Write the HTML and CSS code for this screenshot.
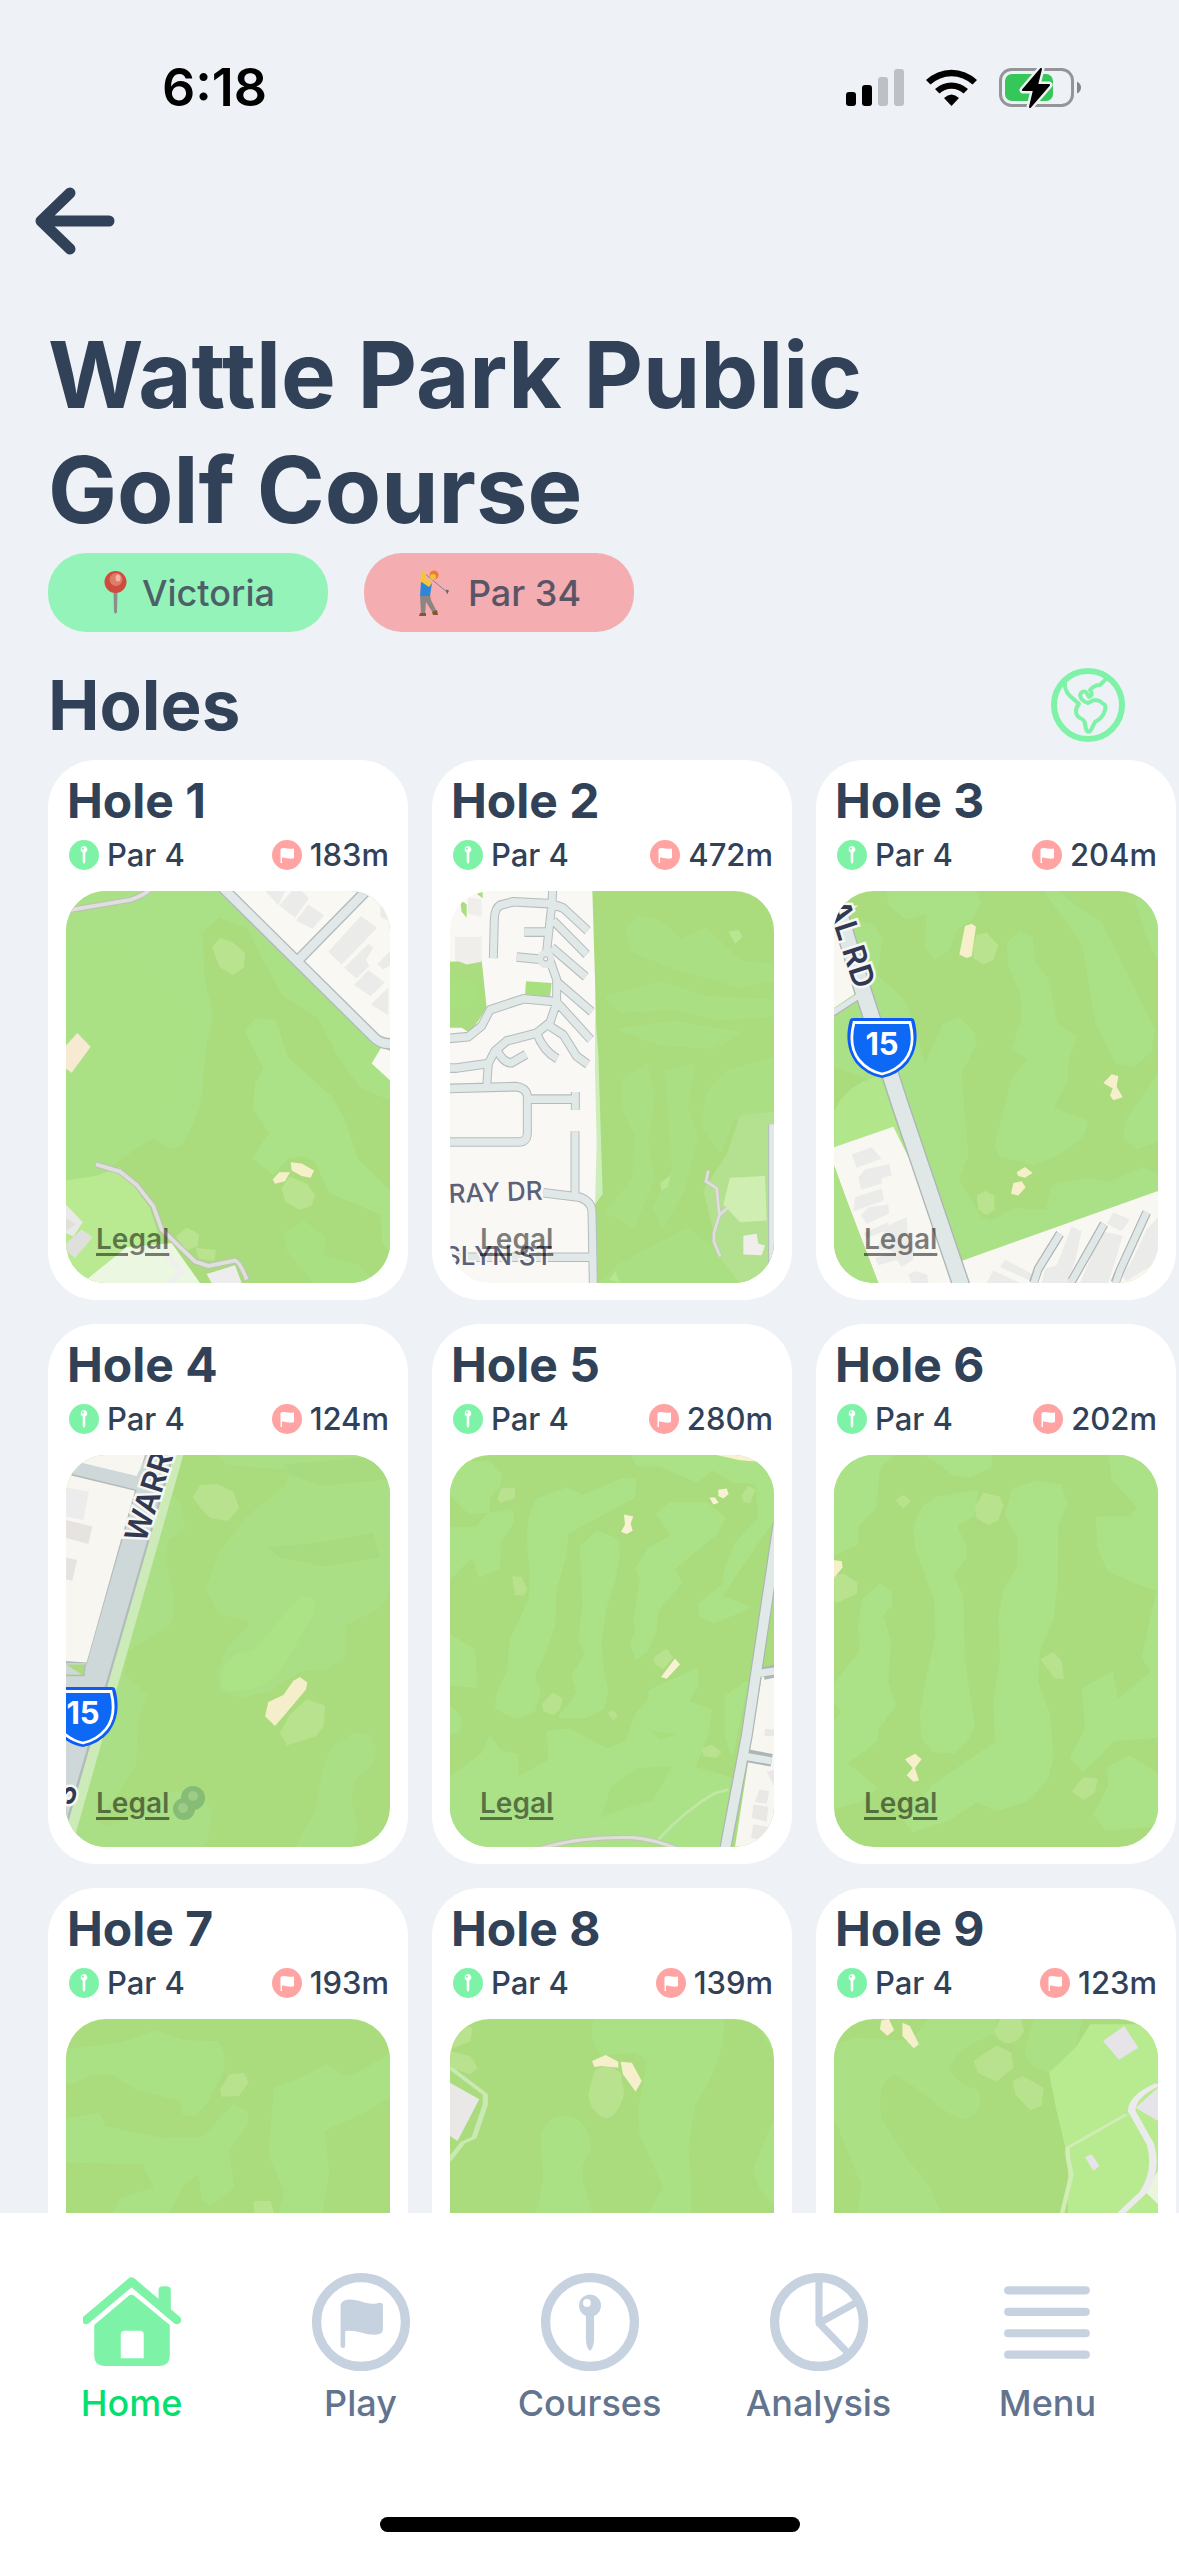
FILE: index.html
```html
<!DOCTYPE html>
<html lang="en">
<head>
<meta charset="utf-8">
<meta name="viewport" content="width=device-width, initial-scale=1">
<title>Wattle Park Public Golf Course</title>
<link rel="stylesheet" href="styles.css">
</head>
<body>
<svg class="defs" aria-hidden="true">
  <symbol id="tee" viewBox="0 0 96 96">
    <path fill-rule="evenodd" d="M48 21a11 11 0 0 0-4 21.200V64q0 9 4 12.500q4-3.500 4-12.500V42.200A11 11 0 0 0 48 21zM45 25.500a3.800 3.800 0 1 1 0 7.600a3.800 3.800 0 0 1 0-7.600z"/>
  </symbol>
  <symbol id="flag" viewBox="0 0 96 96">
    <path d="M28 31q2-5 9-5c10 0 15 5 25 4q7-2 7.500 1V55q0 5-8 5.500c-12 0-17-5.500-29-3.500V71q0 2.500-2.200 2.500T28 71z"/>
  </symbol>
  <symbol id="par-icon" viewBox="0 0 30 30">
    <circle cx="15" cy="15" r="15" fill="#7ef3a8"/>
    <path fill="#fff" fill-rule="evenodd" d="M15 6a3.400 3.400 0 0 0-1.300 6.500V22l1.300 2 1.300-2V12.500A3.400 3.400 0 0 0 15 6zM14 7.500a1 1 0 1 1 0 2a1 1 0 0 1 0-2z"/>
  </symbol>
  <symbol id="distance-icon" viewBox="0 0 30 30">
    <circle cx="15" cy="15" r="15" fill="#ffa3a3"/>
    <path fill="#fff" d="M8.500 9.500q0-1.500 3-1.500c4 0 6 1.500 10.500.5V18c-4 2-8-1-12-.5V23H8.500z"/>
  </symbol>
  <symbol id="shield" viewBox="0 0 70 60">
    <path fill="#0d5cf5" d="M6 0H64Q67 0 67.500 3C72 20 69 34 61 45Q51 57 35 60Q19 57 9 45C1 34-2 20 2.500 3Q3 0 6 0z"/>
    <path fill="#0e68f6" stroke="#fff" stroke-width="2.800" d="M7 4.500H63C67 20 66 32 58 42Q49 53 35 56Q21 53 12 42C4 32 3 20 7 4.500z"/>
  </symbol>
</svg>

<div class="app">
  <div class="status">
    <span class="time">6:18</span>
    <svg class="status-icons" viewBox="0 0 236 40" aria-label="Signal, Wi-Fi and battery">
      <rect x="0" y="24" width="10" height="14" rx="3"/>
      <rect x="16" y="17" width="10" height="21" rx="3"/>
      <rect x="32" y="9" width="10" height="29" rx="3" fill="#bdc1c5"/>
      <rect x="48" y="1" width="10" height="37" rx="3" fill="#bdc1c5"/>
      <path d="M80 12a37 37 0 0 1 51 0l-4.500 4.500a31 31 0 0 0-42 0zM89 21a24 24 0 0 1 33 0l-4.500 4.500a17.500 17.500 0 0 0-24 0zM98 30q7.500-7 15 0l-7.500 8z"/>
      <rect x="154.500" y="1.500" width="72" height="36" rx="11" fill="none" stroke="#949599" stroke-width="3"/>
      <path fill="#85868a" d="M231 13.500q4 2 4 6t-4 6z"/>
      <rect x="159" y="6" width="48" height="27" rx="7" fill="#35c759"/>
      <path stroke="#eef1f6" stroke-width="7" stroke-linejoin="round" d="M195 1l-18 21h11l-4 17 19-22h-12z"/>
      <path stroke="#000" stroke-width="2" stroke-linejoin="round" d="M195 1l-18 21h11l-4 17 19-22h-12z"/>
    </svg>
  </div>

  <main class="content">
    <button class="back" type="button" aria-label="Back">
      <svg viewBox="0 0 80 68"><path d="M74 34H6M35 6L6 34L35 62" fill="none" stroke="#304158" stroke-width="11" stroke-linecap="round" stroke-linejoin="round"/></svg>
    </button>

    <header class="course">
      <h1>Wattle Park Public Golf Course</h1>
      <div class="tags">
        <span class="tag tag-green">
          <svg class="emoji" viewBox="0 0 38 46" aria-hidden="true">
            <path fill="#8b8f8c" d="M17.500 20h4l-.5 22q-1.500 3-3 0z"/>
            <circle cx="19.500" cy="12" r="11" fill="#cf4b3d"/>
            <circle cx="20" cy="9.500" r="6.500" fill="#e07a69"/>
            <ellipse cx="22" cy="8" rx="2.500" ry="3.500" fill="#f3b4a6"/>
          </svg>
          <span>Victoria</span>
        </span>
        <span class="tag tag-red">
          <svg class="emoji" viewBox="0 0 38 46" aria-hidden="true">
            <path d="M12 3L35 22" stroke="#85848c" stroke-width="1" fill="none"/>
            <path d="M34 19.500l3 1-2 4z" fill="#596270"/>
            <path d="M8 25h10l1 5 6 12-4 1-7-11-1 12H9z" fill="#8d8583"/>
            <path d="M9 12l4-3 7 4-2 13H8z" fill="#2f86d8"/>
            <path d="M10 1h4v7l6 5-3 4-9-6z" fill="#f5c342"/>
            <circle cx="22" cy="5" r="4.500" fill="#ed7b30"/>
            <circle cx="21" cy="7" r="3" fill="#f3bd42"/>
            <path d="M8 43h6v3H7zM20 42l5-2 1 5h-5z" fill="#8c542c"/>
          </svg>
          <span>Par 34</span>
        </span>
      </div>
    </header>

    <section class="holes">
      <div class="holes-head">
        <h2>Holes</h2>
        <button class="globe" type="button" aria-label="Show on map">
          <svg viewBox="0 0 74 74" fill="none" stroke="#7ef3a8" stroke-linejoin="round" stroke-linecap="round">
            <circle cx="37" cy="37" r="34" stroke-width="6"/>
            <path stroke-width="4" d="M14 14Q13 22 19 28L28 36Q25 39 25 43Q25 48 29 50Q34 52 34 56L35 61Q38 67 41 60L44 54Q52 50 54 42Q56 37 51 35Q49 32 43 32L37 35Q30 33 29 27Q31 22 35 24L38 29Q43 27 39 22Q43 17 49 17L56 10"/>
          </svg>
        </button>
      </div>

      <div class="grid">
        <article class="card">
          <h3>Hole 1</h3>
          <div class="facts"><span class="fact"><svg><use href="#par-icon"/></svg>Par 4</span><span class="fact"><svg><use href="#distance-icon"/></svg>183m</span></div>
          <div class="map">
            <svg viewBox="0 0 324 392">
              <svg width="324" height="392" viewBox="78 392 972 1098" preserveAspectRatio="none">
                <path fill="#a9e184" d="M78 392h972v1098H78z"/>
                <path fill="#aae086" d="M78 392H700V800L500 1100H78L350 1060Q450 900 440 740Q360 560 78 510z"/>
                <path fill="#aadb7c" stroke="#aadb7c" stroke-width="10" stroke-linejoin="round" d="M492 510L540 472L620 502L665 590L725 690L830 752L890 860L960 950L1055 985V1495H300L200 1180L280 1125L340 1090L390 1120L430 1110L470 1035L490 980L500 850L525 740L500 640z"/>
                <path fill="#ace287" stroke="#ace287" stroke-width="8" stroke-linejoin="round" d="M618 785L650 752L705 758L740 860L870 968L910 1030L950 1145L1055 1240V1400L1032 1380L1025 1295L870 1235L830 1150L790 1130L740 1140L700 1182L642 1140L692 1070L642 1000L650 930L675 890z"/>
                <path fill="#a9e081" d="M730 1350L790 1315L858 1360L850 1410L960 1440L1000 1490H820L740 1400z"/>
                <path fill="#b9e990" d="M78 1202L165 1190L240 1165L330 1280L370 1400L430 1490H78z"/>
                <path fill="#b9e38f" stroke="#b9e38f" stroke-width="6" stroke-linejoin="round" d="M520 550L540 527L575 537L612 565L608 605L578 625L540 602zM728 1225L750 1195L800 1215L822 1245L812 1272L780 1282L738 1260zM412 1360L440 1338L474 1355L470 1385L440 1395zM470 1395L525 1400L520 1425L480 1420z"/>
                <path fill="#ecf7e2" d="M140 1480L260 1390L395 1378L480 1490H140z"/>
                <path fill="#f5efca" d="M752 1152L785 1155L822 1175L812 1195L785 1190L755 1175zM698 1200L718 1180L750 1180L735 1205L705 1212z"/>
                <path fill="#f6ead2" d="M78 825L112 790L152 828L95 901L78 890z"/>
                <path fill="#f9f8f3" d="M540 392H1050V810H1010zM995 875L1025 828L1050 840V922z"/>
                <path fill="#ebebea" d="M675 392H735L715 432zM755 392H785L807 412L765 467L718 432zM805 430L852 460L818 498L768 475zM962 462L1012 495L905 598L865 562zM985 540L1000 550L978 585L988 602L950 637L912 607zM985 613L1034 648L992 686L942 655zM1045 662V740L993 710zM1020 435L1045 450V475L1022 465zM1050 560V600L1030 612L1012 597z"/>
                <path fill="none" stroke="#b1bbbd" stroke-width="33" d="M545 380L1000 800Q1020 822 1060 820M775 585L975 395"/>
                <path fill="none" stroke="#e1e8e9" stroke-width="25" d="M545 380L1000 800Q1020 822 1060 820M775 585L975 395"/>
                <path fill="#e9e9e7" d="M78 1270L128 1320L100 1360L78 1350z"/>
                <path fill="#dfe0dc" d="M78 1380L125 1340L158 1362L105 1420L78 1400zM78 1310L108 1325L78 1345z"/>
                <path fill="#eeeded" d="M500 1465L585 1440L605 1490H515z"/>
                <path fill="none" stroke="#bfc1bb" stroke-width="17" d="M78 447L270 417Q310 405 330 388M168 1158L240 1178L290 1215L340 1275L365 1340L465 1430L505 1442L585 1427Q600 1432 622 1482"/>
                <path fill="none" stroke="#dfe0dc" stroke-width="11" d="M78 447L270 417Q310 405 330 388M168 1158L240 1178L290 1215L340 1275L365 1340L465 1430L505 1442L585 1427Q600 1432 620 1480"/>
                <path fill="none" stroke="#efefee" stroke-width="15" d="M370 1400L425 1460L385 1495"/>
              </svg>
            </svg>
            <a class="legal" href="#legal">Legal</a>
          </div>
        </article>

        <article class="card">
          <h3>Hole 2</h3>
          <div class="facts"><span class="fact"><svg><use href="#par-icon"/></svg>Par 4</span><span class="fact"><svg><use href="#distance-icon"/></svg>472m</span></div>
          <div class="map">
            <svg viewBox="0 0 324 392">
              <svg width="324" height="392" viewBox="90 392 972 1098" preserveAspectRatio="none">
                <path fill="#f9f8f4" d="M90 392h972v1098H90z"/>
                <path fill="#aadc7e" d="M517 392H1062V1490H525V1270L545 1240L530 900L525 640z"/>
                <path fill="#cdeebb" d="M525 720L535 850L548 1240L525 1270L530 1100L525 900z"/>
                <path fill="#abdf84" stroke="#abdf84" stroke-width="8" stroke-linejoin="round" d="M620 500L650 465L720 480L780 530L860 500L960 590L1062 600V640L960 660L820 620L740 600L640 560zM560 690L720 650L860 690L1062 700V740L900 750L760 720L600 730zM600 780L760 760L960 790L880 830L720 820zM610 920L680 880L700 960L680 1100L700 1200L640 1330L560 1290L640 1200L650 1080L610 1000zM740 900L820 880L800 1000L830 1080L790 1230L730 1330L700 1280L760 1170L750 1040zM860 960L920 900L1062 860V1010L940 1030L900 1120L850 1050zM680 1400L800 1340L980 1460L985 1490H540L600 1440z"/>
                <path fill="#b4e18f" d="M960 1020L1062 1010V1490H960L900 1420L850 1230L920 1130z"/>
                <path fill="#ceeeb2" d="M930 1195L1035 1190L1040 1315L960 1320L910 1270z"/>
                <path fill="#b9e693" d="M925 505L955 502L968 520L945 540zM720 1210L750 1190L745 1220L725 1230zM570 1480L585 1457L600 1490z"/>
                <path fill="#aadc80" d="M90 590L185 585L200 720L150 790L125 775H90zM120 415L140 430V467L125 450zM170 400L188 395V412z"/>
                <path fill="#a8e080" d="M90 635L175 640V715L90 720zM318 645L395 650L390 688L315 682z"/>
                <path fill="#efeeeb" d="M145 410L185 415V465L142 455zM105 520L185 520V590L140 598L105 585zM970 1358L1010 1352L1015 1380L1035 1385L1025 1412L970 1410z"/>
                <g fill="none" stroke="#b5bcbd" stroke-width="27" stroke-linejoin="round">
                  <path d="M398 385L396 425L380 560L410 640V705L390 760L350 790L260 812L225 840L205 875L200 940M220 580L223 470Q225 440 240 432L280 422L396 428L430 440L503 503M313 507H385M400 475L500 570M395 550L497 632M415 650L515 730M412 705L512 808M290 577L380 585M350 790Q370 840 412 862M385 768L430 795L470 855L503 877M232 838Q250 875 275 873L318 850M410 702L310 694L210 725L185 770L145 800L85 805M205 875L110 888H85M85 945L290 940Q322 945 322 970V1070Q322 1095 295 1095H85M322 975H465M466 955V1005M465 1065V1240M370 1237L480 1250Q515 1262 516 1290L520 1495M100 1418H516M1058 1045V1440"/>
                </g>
                <g fill="none" stroke="#e1e8e8" stroke-width="21" stroke-linejoin="round">
                  <path d="M398 385L396 425L380 560L410 640V705L390 760L350 790L260 812L225 840L205 875L200 940M220 580L223 470Q225 440 240 432L280 422L396 428L430 440L503 503M313 507H385M400 475L500 570M395 550L497 632M415 650L515 730M412 705L512 808M290 577L380 585M350 790Q370 840 412 862M385 768L430 795L470 855L503 877M232 838Q250 875 275 873L318 850M410 702L310 694L210 725L185 770L145 800L85 805M205 875L110 888H85M85 945L290 940Q322 945 322 970V1070Q322 1095 295 1095H85M322 975H465M466 955V1005M465 1065V1240M370 1237L480 1250Q515 1262 516 1290L520 1495M100 1418H516M1058 1045V1440"/>
                </g>
                <circle cx="377" cy="582" r="26" fill="#e1e8e8"/>
                <circle cx="377" cy="582" r="6" fill="#f9f8f4" stroke="#b5bcbd" stroke-width="3"/>
                <path fill="none" stroke="#c6c6bd" stroke-width="12" d="M865 1175L858 1205L890 1225L898 1300L882 1350V1375L900 1415M898 1300L922 1280"/>
                <path fill="none" stroke="#dfdfda" stroke-width="8" d="M865 1175L858 1205L890 1225L898 1300L882 1350V1375L900 1415M898 1300L922 1280"/>
              </svg>
              <text class="street" x="-1" y="312" transform="rotate(-2 0 311)">RAY DR</text>
              <text class="street" x="-6" y="374">SLYN ST</text>
            </svg>
            <a class="legal" href="#legal">Legal</a>
          </div>
        </article>

        <article class="card">
          <h3>Hole 3</h3>
          <div class="facts"><span class="fact"><svg><use href="#par-icon"/></svg>Par 4</span><span class="fact"><svg><use href="#distance-icon"/></svg>204m</span></div>
          <div class="map">
            <svg viewBox="0 0 324 392">
              <svg width="324" height="392" viewBox="102 392 972 1098" preserveAspectRatio="none">
                <path fill="#aadb7c" d="M102 392h972v1098H102z"/>
                <g fill="#abe186" stroke="#abe186" stroke-width="10" stroke-linejoin="round">
                  <path d="M265 392H520L540 425L510 470L465 500L445 555L405 578L380 550L385 450L320 468L270 430zM175 480L220 490L243 530L225 630L270 665L310 700L335 760L375 890L430 770L475 750L520 790L525 820L480 900L490 1030L500 1130L472 1200L540 1310L580 1320L640 1285L740 1290L760 1220L860 1200L930 1210L1030 1170L1074 1190V1240L495 1420L300 1040L200 910L102 880V700z"/>
                  <path d="M625 540L660 510L695 525L700 590L740 640L770 770L825 800L800 870L800 920L755 1000L860 1040L845 1080L770 1130L700 1155L600 1130L590 1100L640 920L690 860L640 835L670 750L665 680L630 600z"/>
                  <path d="M740 395H770L830 440L900 480L1060 780L1050 840L1000 880L950 870L890 760L870 640L850 540zM1010 420L1074 380V580L1040 510zM1074 910V1090L1010 1110L975 1080L985 1030z"/>
                </g>
                <path fill="#b2e68b" d="M102 1100V1010Q140 930 240 910L310 1100L400 1300L102 1220z"/>
                <path fill="#b9e38f" d="M520 545L530 515L560 508L595 545L580 585L550 598L520 580zM530 1245L555 1232L583 1245V1285L560 1300L535 1285z"/>
                <path fill="#f5efca" d="M495 490L515 484L528 492L515 575L500 580L478 570zM910 930L935 905L955 910L950 940L968 970L940 978L930 965L938 945zM650 1180L675 1165L698 1182L675 1195L655 1190zM640 1210L665 1205L677 1222L655 1245L633 1240z"/>
                <path fill="#f8f7f2" d="M102 1110L280 1052L480 1430L1074 1232V1490H235L145 1270L102 1160zM102 470L165 680L102 720z"/>
                <path fill="#ace185" d="M102 1160L145 1270L235 1490H102z"/>
                <path fill="#ebebea" d="M155 1130L215 1110L245 1142L170 1167zM175 1195L195 1172L268 1157L275 1188L245 1197V1212L183 1228zM165 1250L245 1225L252 1258L160 1290zM183 1300L205 1278L265 1270L267 1295L200 1325zM260 1330L320 1305L325 1370L340 1375V1425L305 1445L275 1400L230 1395zM190 1350L265 1320V1340L200 1365zM225 1420L280 1405L292 1425L235 1440zM325 1465L350 1457L382 1467L385 1490H335zM560 1490L580 1455L660 1490zM600 1445L615 1425L708 1470L705 1490zM940 1292L990 1312L965 1345L920 1325zM815 1332L845 1345L825 1430L800 1490H725L735 1450L770 1440zM905 1345L968 1358L925 1490H840zM1074 1305V1430L980 1485L965 1470L1000 1420L1040 1340z"/>
                <path fill="none" stroke="#aeb5b5" stroke-width="20" d="M95 737L175 688" stroke-linecap="square"/>
                <path fill="none" stroke="#aeb5b5" stroke-width="54" d="M110 430L185 660L300 990L485 1500"/>
                <path fill="none" stroke="#e0e7e7" stroke-width="46" d="M110 430L185 660L300 990L485 1500"/>
                <path fill="none" stroke="#e0e7e7" stroke-width="16" d="M95 735L185 680"/>
                <path fill="none" stroke="#aeb5b5" stroke-width="27" d="M780 1352L715 1450L700 1490M912 1325L815 1485M1040 1292L960 1455L945 1490"/>
                <path fill="none" stroke="#e0e7e7" stroke-width="20" d="M780 1352L715 1450L700 1495M912 1325L815 1485L805 1500M1040 1292L960 1455L945 1495"/>
              </svg>
              <text class="road" transform="translate(-7 13) rotate(72)">AL RD</text>
              <use href="#shield" x="13" y="127" width="70" height="60"/>
              <text class="shield-number" x="48" y="164">15</text>
            </svg>
            <a class="legal" href="#legal">Legal</a>
          </div>
        </article>

        <article class="card">
          <h3>Hole 4</h3>
          <div class="facts"><span class="fact"><svg><use href="#par-icon"/></svg>Par 4</span><span class="fact"><svg><use href="#distance-icon"/></svg>124m</span></div>
          <div class="map">
            <svg viewBox="0 0 324 392">
              <svg width="324" height="392" viewBox="78 403 972 1098" preserveAspectRatio="none">
                <path fill="#aadb7c" d="M78 403h972v1098H78z"/>
                <g fill="#abdf86" stroke="#abdf86" stroke-width="8" stroke-linejoin="round">
                  <path d="M535 403H1050V760L1030 820L915 880L910 970L860 1000L780 1005L690 1060L600 1080L540 1060L535 1010L560 950L640 870L540 845L500 780L540 680L620 580L740 490L755 440L650 435L560 425z"/>
                  <path d="M380 500L420 540L432 610L380 640L375 710L398 800V850L385 880L260 950L250 1020L318 1075L290 1150L285 1270L230 1350L160 1430L200 1445L290 1420L380 1350L470 1350L515 1400L500 1480L485 1500H78V1300z"/>
                  <path d="M945 1185L990 1190L1005 1230L995 1270L940 1310L930 1370L950 1440L935 1500H770L830 1400L850 1290L880 1220z"/>
                </g>
                <path fill="#ace386" d="M780 800Q840 790 820 850L720 1010Q640 1080 545 1060Q530 1000 590 960L640 950z"/>
                <path fill="#a8db80" d="M680 660L830 650L1000 620L1020 690L850 715L720 690zM730 430L1050 403V470L850 490L755 460z"/>
                <path fill="#b8e28e" d="M458 520L480 488L530 484L580 505L597 550L565 588L510 580L480 550zM720 1180L750 1130L800 1087L855 1105L852 1160L830 1190L740 1217z"/>
                <path fill="#f4eecb" d="M760 1035L780 1025L802 1040L798 1060L735 1130L705 1162L675 1135L685 1095L730 1075z"/>
                <path fill="#f7f6f1" d="M78 403H330L140 985H78z"/>
                <path fill="#b7e78c" d="M78 1025L130 1020L120 1055H78z"/>
                <path fill="#ececec" d="M78 495L147 505L130 585L78 575z"/>
                <path fill="#e6e3e0" d="M78 585L157 603L145 652L78 635zM78 690L111 697L97 755L78 752z"/>
                <path fill="#ccebb8" d="M400 403H430L105 1470L78 1450z"/>
                <path fill="#b1bbbc" d="M315 403H402L85 1430L78 1440V1020L133 1018L132 988L78 990V980L140 984L240 650L285 503L78 457V446L284 497z"/>
                <path fill="#cfd8d8" d="M320 403H396L82 1415L78 1425V1023H134L138 986H78V1018H125L78 990H140L290 500L78 452V414L290 462z"/>
              </svg>
              <text class="road" transform="translate(79 89) rotate(-72)">WARR</text>
              <text class="road" transform="translate(6 352) rotate(-72)">S</text>
              <use href="#shield" x="-18" y="232" width="70" height="60"/>
              <text class="shield-number" x="17" y="269">15</text>
              <g fill="#86bc75"><circle cx="127" cy="343" r="12"/><circle cx="118" cy="354" r="11"/></g>
              <g fill="#9dcb88"><circle cx="127" cy="341" r="5"/><circle cx="117" cy="353" r="5"/></g>
            </svg>
            <a class="legal" href="#legal">Legal</a>
          </div>
        </article>

        <article class="card">
          <h3>Hole 5</h3>
          <div class="facts"><span class="fact"><svg><use href="#par-icon"/></svg>Par 4</span><span class="fact"><svg><use href="#distance-icon"/></svg>280m</span></div>
          <div class="map">
            <svg viewBox="0 0 324 392">
              <svg width="324" height="392" viewBox="90 403 972 1098" preserveAspectRatio="none">
                <path fill="#aadb7c" d="M90 403h972v1098H90z"/>
                <g fill="#ace287" stroke="#ace287" stroke-width="10" stroke-linejoin="round">
                  <path d="M90 425H210L243 460L235 490L205 520V560L150 565L90 510zM90 610H170L205 570L275 560L278 590L240 640L235 720L180 740L165 700L160 680L90 745z"/>
                  <path d="M330 580L350 530L440 498L490 520L610 472L645 475L640 520L540 570L440 620L435 680L405 780L400 880L375 950L340 1020L358 1070L340 1120L290 1138L230 1110L235 1070L265 1010L275 920L330 810L335 740L325 640z"/>
                  <path d="M485 660L530 620L590 640L595 680L580 760L555 830L540 920L545 1000L560 1060L550 1110L500 1135H420L440 1115L475 1070L460 1020L500 960L480 920L492 820z"/>
                  <path d="M715 570L750 540L860 540L910 580L890 620L760 720L780 760L710 840L705 890L680 950L650 970L635 930L650 900L645 860L665 750L650 720L690 665L760 630z"/>
                  <path d="M640 405H900L1020 425L1060 480V580L900 800L985 830L880 870L840 850V820L910 770L920 720L950 650L1020 580L1010 480L940 475L880 440L830 475L780 455L720 430L650 430zM90 910L160 950L168 1050L90 1045zM90 1110L120 1140L115 1175L90 1180z"/>
                  <path d="M90 1310L190 1240L210 1195L240 1235L290 1245L290 1310L390 1260L385 1180L450 1175L560 1230L620 1210L650 1130L690 1090V1065L830 1005L830 1050L800 1095L870 1120L860 1190L820 1280L895 1300L930 1310L895 1500H90zM920 1080L980 1040L935 1240L920 1190z"/>
                </g>
                <path fill="#a8dd80" d="M650 1280L755 1275L700 1370L640 1385L540 1420L575 1330zM690 1175L770 1185L720 1200z"/>
                <path fill="#b8e28e" d="M232 525L245 495L285 495V525L240 537zM276 742L305 745L322 780L310 797L285 795zM700 970L740 945L760 970L730 1003L705 990zM365 1100L400 1068L428 1085L420 1115L400 1132L370 1120zM562 1125L580 1118L593 1132L580 1147zM845 1225L875 1213L905 1235L890 1252L850 1247zM965 515L985 490L1007 500L990 538L970 535z"/>
                <path fill="#f8f1d3" d="M612 570L640 575L632 595L638 615L620 624L603 618L615 598zM895 500L920 497L926 512L910 525L895 518zM868 522L885 522L896 537L880 542zM765 973L780 990L740 1030L723 1025zM890 403H1000L1020 422L960 418z"/>
                <path fill="#f7f6f1" d="M1025 1025L1062 1015V1500H945L985 1260z"/>
                <path fill="none" stroke="#adb5b6" stroke-width="36" d="M1075 600L980 1190L915 1510M1030 1015L1065 1008M980 1245L1055 1258"/>
                <path fill="none" stroke="#e1e8e8" stroke-width="29" d="M1075 600L980 1190L915 1510"/>
                <path fill="none" stroke="#e1e8e8" stroke-width="20" d="M1015 1015L1065 1008M965 1245L1055 1260"/>
                <path fill="#e9e8e6" d="M1035 1170L1062 1172V1190H1033zM1040 1290L1062 1285V1330zM1018 1340L1048 1345L1040 1380L1005 1375zM1000 1382L1045 1388L1040 1430L995 1420zM1000 1437L1045 1445L1020 1480L993 1475z"/>
                <path fill="none" stroke="#c0e7a4" stroke-width="8" d="M715 1480Q800 1395 885 1350L925 1340"/>
                <path fill="none" stroke="#bfc7b4" stroke-width="15" d="M350 1508Q480 1470 640 1475Q700 1480 770 1505"/>
                <path fill="none" stroke="#dedfd8" stroke-width="9" d="M350 1508Q480 1470 640 1475Q700 1480 770 1505"/>
              </svg>
            </svg>
            <a class="legal" href="#legal">Legal</a>
          </div>
        </article>

        <article class="card">
          <h3>Hole 6</h3>
          <div class="facts"><span class="fact"><svg><use href="#par-icon"/></svg>Par 4</span><span class="fact"><svg><use href="#distance-icon"/></svg>202m</span></div>
          <div class="map">
            <svg viewBox="0 0 324 392">
              <svg width="324" height="392" viewBox="102 403 972 1098" preserveAspectRatio="none">
                <path fill="#aadb7c" d="M102 403h972v1098H102z"/>
                <g fill="#ace287" stroke="#ace287" stroke-width="10" stroke-linejoin="round">
                  <path d="M102 403H275L235 440L225 550L170 600V650L102 680zM380 403H570V435L510 462L460 455L420 425z"/>
                  <path d="M345 600L370 550L410 525L530 505L520 570L465 600L495 660V690L455 740L485 800L490 980L520 1160L500 1200L460 1235L400 1230L368 1195L365 1120L385 1020L410 920L408 810L380 740L350 660z"/>
                  <path d="M620 570L640 500L710 480L780 490L798 540L770 600L768 770L755 860L715 950L710 1040L745 1130L755 1250L740 1310L680 1370L590 1395L530 1370L440 1425L340 1455L320 1430L400 1330L590 1210L585 1100L605 970L600 860L615 780L655 720L660 640z"/>
                  <path d="M190 810L240 768L272 790L270 825L245 850L268 930L260 1040L283 1105L230 1170V1200L190 1230L135 1265L225 1335L180 1370L102 1390V1160L130 1120L102 1090V1050L180 960L185 920L178 890z"/>
                  <path d="M930 403H1074V780L1000 755L925 725L897 660L893 580L990 578L1018 550L940 470zM1074 790V1190L940 1200L850 1285L815 1250L860 1170L850 1060L935 1015L950 1095L1060 1010L1030 970L1060 840zM925 1280L990 1250L1074 1300V1440L920 1450L885 1410L930 1330z"/>
                </g>
                <path fill="#b8e28e" d="M287 530L310 515L333 532L310 553zM525 550L550 508L600 520L610 545L595 585L565 600L530 580zM102 740L130 735L172 760V790L110 818L102 810zM720 975L760 955L785 980L792 1030L765 1030zM815 1345L850 1305L893 1310L885 1350L850 1370z"/>
                <path fill="#f5efca" d="M102 698L125 700L128 718L102 747zM315 1255L345 1240L365 1255L345 1280L357 1315L340 1318L320 1300L338 1280z"/>
              </svg>
            </svg>
            <a class="legal" href="#legal">Legal</a>
          </div>
        </article>

        <article class="card">
          <h3>Hole 7</h3>
          <div class="facts"><span class="fact"><svg><use href="#par-icon"/></svg>Par 4</span><span class="fact"><svg><use href="#distance-icon"/></svg>193m</span></div>
          <div class="map">
            <svg viewBox="0 0 324 392">
              <svg width="324" height="392" viewBox="88 444 431 1176" preserveAspectRatio="none">
                <path fill="#aadb7c" d="M88 444h431v1176H88z"/>
                <g fill="#abe185">
                  <path d="M88 533L160 515L205 478L245 508L290 510Q302 540 298 600L275 700L258 738L243 730L240 690L180 655L150 612L122 610L98 640L88 635zM88 742L132 725L140 765L215 800L270 798L310 700L330 720L330 760L305 840L312 950L280 1005L268 985L265 908L245 940L220 1050H145L160 980L205 950L190 880L88 875z"/>
                  <path d="M519 545V755L495 762L465 830L475 960L490 1050H368L378 960L357 850L365 650L400 620L435 580L460 615L480 600z"/>
                </g>
                <path fill="#aadb7c" d="M432 780L480 730L519 680V755L495 762L465 830L490 1050H428L438 900z"/>
                <path fill="#b8e28e" d="M293 655L305 610L325 605L331 635L318 675L295 677zM338 990H360L368 1050H338z"/>
              </svg>
            </svg>
            <a class="legal" href="#legal">Legal</a>
          </div>
        </article>

        <article class="card">
          <h3>Hole 8</h3>
          <div class="facts"><span class="fact"><svg><use href="#par-icon"/></svg>Par 4</span><span class="fact"><svg><use href="#distance-icon"/></svg>139m</span></div>
          <div class="map">
            <svg viewBox="0 0 324 392">
              <svg width="324" height="392" viewBox="598 444 431 1176" preserveAspectRatio="none">
                <path fill="#aadb7c" d="M598 444h431v1176H598z"/>
                <path fill="#abe185" d="M790 444H963Q965 560 925 700L915 830Q920 920 918 1050H855L882 950L850 790L848 720L860 570L845 545L800 555Q780 500 790 444zM718 800Q725 730 755 736Q785 750 785 840Q770 880 775 930L790 1050H710L722 920zM1012 444H1029V540Q1010 500 1012 444zM1029 740V1000Q1005 960 1002 890z"/>
                <path fill="#b8e28e" d="M598 444L628 470L625 510L605 530H598zM598 540L625 555L635 590L625 610L598 590zM790 600Q805 570 825 605L830 670Q820 740 806 741Q785 730 782 670z"/>
                <path fill="#f6efcb" d="M787 570L805 552L822 572V590L800 585L790 588zM825 572L840 575L853 630L845 662L828 610z"/>
                <path fill="#e9e8e6" d="M598 635L637 685L608 810L598 795z"/>
                <path fill="none" stroke="#c8e9b2" stroke-width="7" d="M598 590L645 670V700L630 800L615 815L596 870"/>
              </svg>
            </svg>
            <a class="legal" href="#legal">Legal</a>
          </div>
        </article>

        <article class="card">
          <h3>Hole 9</h3>
          <div class="facts"><span class="fact"><svg><use href="#par-icon"/></svg>Par 4</span><span class="fact"><svg><use href="#distance-icon"/></svg>123m</span></div>
          <div class="map">
            <svg viewBox="0 0 324 392">
              <svg width="324" height="392" viewBox="1109 444 431 1176" preserveAspectRatio="none">
                <path fill="#aadb7c" d="M1109 444h431v1176h-431z"/>
                <path fill="#abe085" d="M1235 444H1325L1322 490Q1270 530 1262 600L1280 640L1302 660Q1310 730 1280 745Q1250 720 1230 670L1190 610Q1165 630 1172 740L1205 860L1235 940L1255 1050H1140L1145 940L1109 740V520L1140 500L1210 510zM1375 444H1440L1430 530L1400 605Q1370 600 1362 540z"/>
                <path fill="#b8ea8f" d="M1450 460H1540V1050H1420L1420 860L1405 720L1395 605L1430 530z"/>
                <path fill="#b8e28e" d="M1322 480L1330 444H1358L1362 480Q1355 515 1340 517Q1325 510 1322 480zM1295 570L1325 523L1345 545L1348 590L1325 632L1300 605zM1347 630L1360 615L1388 650L1385 705L1370 718L1350 670z"/>
                <path fill="#f6efcb" d="M1172 448L1182 444L1189 478L1180 494L1170 475zM1200 455L1210 465L1222 520L1215 532L1200 495z"/>
                <path fill="#e6e4e8" d="M1495 465L1514 530L1488 566L1467 510zM1540 650V750L1510 710zM1443 858L1452 850L1462 885L1454 900z"/>
                <path fill="#e9f6dc" d="M1540 900V1000L1522 960z"/>
                <path fill="none" stroke="#d0edb8" stroke-width="6" d="M1498 730L1420 830Q1418 850 1425 910L1410 1050"/>
                <path fill="none" stroke="#ebebed" stroke-width="10" d="M1540 640Q1505 675 1505 720L1530 820Q1540 900 1520 965L1480 1050"/>
              </svg>
            </svg>
            <a class="legal" href="#legal">Legal</a>
          </div>
        </article>
      </div>
    </section>
  </main>

  <nav class="tabs" aria-label="Main">
    <ul>
      <li><a class="tab active" href="#home" aria-current="page">
        <svg viewBox="0 0 96 96" fill="#7ef3a8">
          <path d="M3 46L47.500 8.500L92 46" fill="none" stroke="#7ef3a8" stroke-width="8.500" stroke-linecap="round" stroke-linejoin="round"/>
          <path d="M74 30V17q0-4 4-4h4q4 0 4 4v20z"/>
          <path fill-rule="evenodd" d="M11 51L44.500 22.500q3-2.500 6 0L85 51v30q0 10-10 10h-54q-10 0-10-10zM37 83.500h22.500V60q0-3.500-3.500-3.500h-15.500q-3.500 0-3.500 3.500z"/>
        </svg>Home</a></li>
      <li><a class="tab" href="#play">
        <svg viewBox="0 0 96 96" fill="#c6d2df"><circle cx="48" cy="48" r="43.500" fill="none" stroke="#c6d2df" stroke-width="9"/><use href="#flag"/></svg>Play</a></li>
      <li><a class="tab" href="#courses">
        <svg viewBox="0 0 96 96" fill="#c6d2df"><circle cx="48" cy="48" r="43.500" fill="none" stroke="#c6d2df" stroke-width="9"/><use href="#tee"/></svg>Courses</a></li>
      <li><a class="tab" href="#analysis">
        <svg viewBox="0 0 96 96" fill="none" stroke="#c6d2df"><circle cx="48" cy="48" r="43.500" stroke-width="9"/><path stroke-width="7" stroke-linejoin="round" d="M48 6V49L86 28M48 49L76 78"/></svg>Analysis</a></li>
      <li><a class="tab" href="#menu">
        <svg viewBox="0 0 96 96" stroke="#c6d2df" stroke-width="8" stroke-linecap="round"><path d="M9 17H85M9 38H85M9 59H85M9 80H85"/></svg>Menu</a></li>
    </ul>
    <div class="home-indicator"></div>
  </nav>
</div>
</body>
</html>
```
FILE: styles.css
```css
* {
  box-sizing: border-box;
}

body {
  margin: 0;
  background: #eef1f6;
  color: #304158;
  font-family: Inter, "Liberation Sans", sans-serif;
}

h1, h2, h3, ul {
  margin: 0;
  padding: 0;
}

button {
  padding: 0;
  border: 0;
  background: none;
}

svg {
  display: block;
}

.defs {
  position: absolute;
  width: 0;
  height: 0;
}

.app {
  display: flex;
  flex-direction: column;
  height: 100vh;
}

/* Status bar */
.status {
  display: flex;
  flex: none;
  align-items: center;
  justify-content: space-between;
  height: 176px;
  padding: 0 97px 0 162px;
  color: #000;
}

.time {
  font-size: 52px;
  font-weight: 600;
  line-height: 60px;
}

.status-icons {
  width: 236px;
  height: 40px;
}

/* Course page */
.content {
  flex: 1;
  min-height: 0;
  overflow: hidden;
}

.back {
  display: block;
  margin: 11px 0 0 35px;
}

.back svg {
  width: 80px;
  height: 68px;
}

.course {
  padding: 62px 48px 0;
}

h1 {
  max-width: 900px;
  font-size: 92px;
  font-weight: 700;
  line-height: 115px;
}

.tags {
  display: flex;
  gap: 36px;
  margin-top: 6px;
}

.tag {
  display: flex;
  align-items: center;
  gap: 8px;
  height: 79px;
  padding: 0 53px 0 48px;
  border-radius: 38px;
  color: #4d6068;
  font-size: 36px;
  font-weight: 500;
  line-height: 44px;
}

.tag-green {
  background: #94f3b9;
}

.tag-red {
  gap: 18px;
  background: #f4adb0;
  color: #5a5566;
}

.emoji {
  width: 38px;
  height: 46px;
}

.holes {
  padding: 31px 3px 24px 48px;
}

.holes-head {
  display: flex;
  align-items: center;
  justify-content: space-between;
  padding: 0 51px 13px 0;
}

h2 {
  font-size: 69px;
  font-weight: 700;
  line-height: 84px;
}

.globe svg {
  width: 74px;
  height: 74px;
}

.grid {
  display: grid;
  grid-template-columns: repeat(3, 1fr);
  gap: 24px;
}

.card {
  padding: 13px 18px 17px;
  border-radius: 48px;
  background: #fff;
}

h3 {
  padding-left: 1px;
  font-size: 48px;
  font-weight: 700;
  line-height: 56px;
}

.facts {
  display: flex;
  justify-content: space-between;
  margin: 8px 0 18px;
  padding: 0 1px 0 3px;
}

.fact {
  display: flex;
  align-items: center;
  gap: 8px;
  font-size: 31px;
  font-weight: 500;
  line-height: 36px;
}

.fact svg {
  width: 30px;
  height: 30px;
}

.map {
  position: relative;
  overflow: hidden;
  border-radius: 40px;
}

.map > svg {
  width: 100%;
  height: auto;
}

.legal {
  position: absolute;
  bottom: 27px;
  left: 30px;
  color: rgba(0, 0, 0, 0.5);
  font-size: 28px;
  font-weight: 600;
  line-height: 34px;
  text-decoration-thickness: 3px;
  text-underline-offset: 4px;
}

.street {
  fill: #5c6078;
  stroke: #f9f8f4;
  stroke-width: 4px;
  paint-order: stroke;
  font-size: 26px;
  font-weight: 500;
}

.road {
  fill: #313852;
  stroke: #f6f6f4;
  stroke-width: 5px;
  paint-order: stroke;
  font-size: 31px;
  font-weight: 600;
}

.shield-number {
  fill: #fff;
  font-size: 31px;
  font-weight: 700;
  text-anchor: middle;
}

/* Tab bar */
.tabs {
  flex: none;
  padding: 60px 17px 24px;
  background: #fff;
}

.tabs ul {
  display: grid;
  grid-template-columns: repeat(5, 1fr);
  list-style: none;
}

.tab {
  display: flex;
  flex-direction: column;
  align-items: center;
  gap: 10px;
  color: #62748e;
  font-size: 36px;
  font-weight: 500;
  line-height: 44px;
  text-decoration: none;
}

.tab.active {
  color: #05df72;
}

.tab svg {
  width: 98px;
  height: 98px;
}

.home-indicator {
  width: 420px;
  height: 15px;
  margin: 92px auto 0;
  border-radius: 8px;
  background: #000;
}
```
